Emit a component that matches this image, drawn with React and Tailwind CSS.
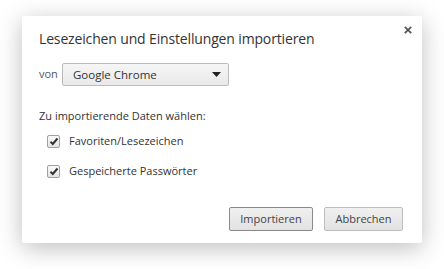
import React from 'react'

const font = { fontFamily: '"Open Sans", "Noto Sans", "Liberation Sans", sans-serif' };

const Check = () => (
    <span className="w-[13px] h-[13px] border border-[#a0a0a0] rounded-[2px] bg-gradient-to-b from-[#fafafa] to-[#e4e4e4] flex items-center justify-center">
        <svg width="10" height="9" viewBox="0 0 10 9">
            <path d="M1.5 4.8 L3.8 7 L8.5 1.5" fill="none" stroke="#333" strokeWidth="2" />
        </svg>
    </span>
);

const App = () => {
    return (
        <div className="w-[444px] h-[269px] bg-white pt-[16px] pl-[22px]" style={font}>
            {/* dialog */}
            <div className="relative w-[400px] h-[227px] bg-white rounded-[2px] shadow-[0_5px_24px_rgba(0,0,0,0.26)] px-[17px] pt-[13px] text-[#333]">
                <button className="absolute right-[10px] top-[10px] w-[8px] h-[8px] flex">
                    <svg width="8" height="8" viewBox="0 0 8 8">
                        <path d="M0.8 0.8 L7.2 7.2 M7.2 0.8 L0.8 7.2" stroke="#555" strokeWidth="1.8" />
                    </svg>
                </button>

                <h2 className="text-[14px] leading-[20px] text-[#333] tracking-[-0.15px]">Lesezeichen und Einstellungen importieren</h2>

                <div className="flex items-center mt-[14px] h-[23px]">
                    <span className="text-[11px] text-[#555] w-[23px]">von</span>
                    <div className="w-[167px] h-[23px] border border-[#bcbcbc] rounded-[2px] bg-gradient-to-b from-[#f6f6f6] to-[#e9e9e9] flex items-center justify-between pl-[10px] pr-[7px]">
                        <span className="text-[11.5px] text-[#333]">Google Chrome</span>
                        <svg width="9" height="5" viewBox="0 0 9 5">
                            <path d="M0 0 L9 0 L4.5 5 Z" fill="#222" />
                        </svg>
                    </div>
                </div>

                <p className="text-[11px] leading-[16px] mt-[22px] text-[#333]">Zu importierende Daten wählen:</p>

                <div className="flex flex-col gap-[17px] mt-[11px] pl-[8px]">
                    <label className="flex items-center gap-[9px] h-[13px]">
                        <Check />
                        <span className="text-[11px] text-[#333]">Favoriten/Lesezeichen</span>
                    </label>
                    <label className="flex items-center gap-[9px] h-[13px]">
                        <Check />
                        <span className="text-[11px] text-[#333]">Gespeicherte Passwörter</span>
                    </label>
                </div>

                <div className="flex justify-end gap-[11px] mt-[29px] -mr-[-2px]">
                    <button className="w-[84px] h-[24px] border border-[#8a8a8a] rounded-[2px] bg-gradient-to-b from-[#f0f0f0] to-[#e2e2e2] text-[11px] text-[#444]">Importieren</button>
                    <button className="w-[79px] h-[24px] border border-[#bdbdbd] rounded-[2px] bg-gradient-to-b from-[#f0f0f0] to-[#e2e2e2] text-[11px] text-[#444]">Abbrechen</button>
                </div>
            </div>
        </div>
    )
}

export default App
